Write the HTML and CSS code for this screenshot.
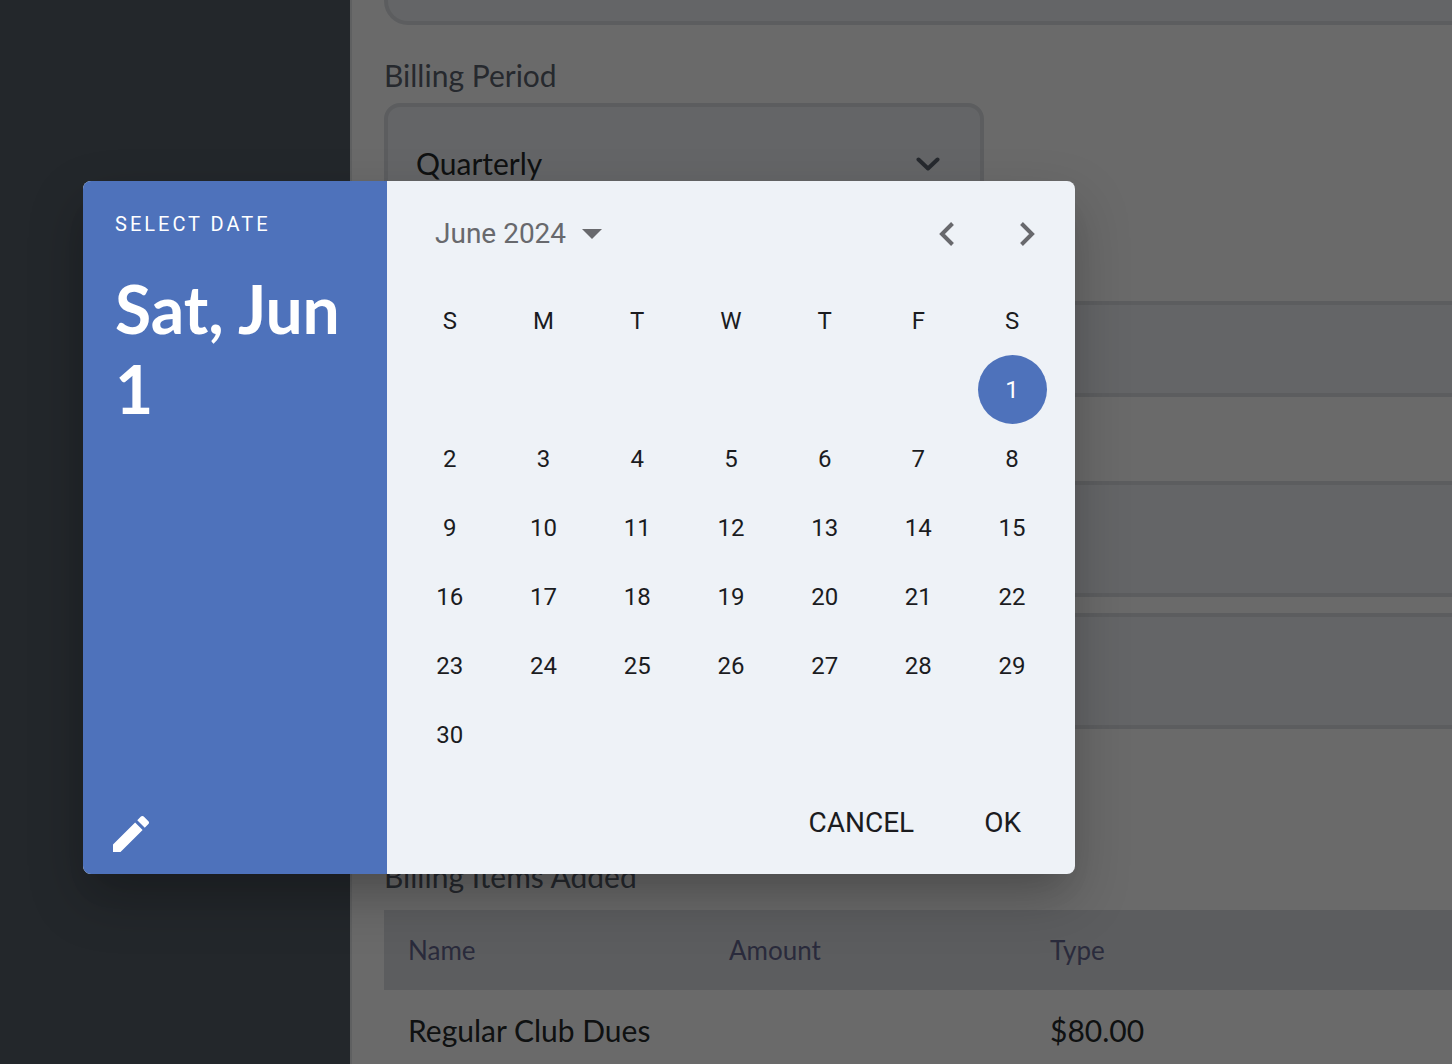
FILE: index.html
```html
<!DOCTYPE html>
<html lang="en">
<head>
    <meta charset="UTF-8">
    <meta name="viewport" content="width=device-width, initial-scale=1.0">
    <title>Billing</title>
    <link rel="stylesheet" href="styles.css">
</head>
<body>
    <div class="page">
        <aside class="sidebar"></aside>
        <main class="content">
            <textarea class="field description" aria-label="Description" readonly></textarea>

            <label class="label" for="period">Billing Period</label>
            <div class="select-wrap">
                <select class="select" id="period">
                    <option>Quarterly</option>
                </select>
                <svg class="chevron" viewBox="0 0 24 14" aria-hidden="true"><path d="M2.5 2.5 12 11.5 21.5 2.5"/></svg>
            </div>

            <input class="field start" type="text" aria-label="Start date" readonly>
            <input class="field tall end" type="text" aria-label="End date" readonly>
            <input class="field tall due" type="text" aria-label="Due date" readonly>

            <h2 class="label items-title">Billing Items Added</h2>
            <table class="items">
                <thead>
                    <tr><th>Name</th><th>Amount</th><th>Type</th></tr>
                </thead>
                <tbody>
                    <tr><td>Regular Club Dues</td><td></td><td>$80.00</td></tr>
                </tbody>
            </table>
        </main>
    </div>

    <div class="scrim"></div>

    <div class="dialog" role="dialog" aria-label="Select date">
        <div class="summary">
            <div class="overline">SELECT DATE</div>
            <h1 class="date">Sat, Jun 1</h1>
            <button class="edit" aria-label="Edit">
                <svg viewBox="3 3 18 18"><path d="M3 17.25V21h3.75L17.81 9.94l-3.75-3.75L3 17.25zM20.71 7.04c.39-.39.39-1.02 0-1.41l-2.34-2.34c-.39-.39-1.02-.39-1.41 0l-1.83 1.83 3.75 3.75 1.83-1.83z"/></svg>
            </button>
        </div>
        <div class="picker">
            <div class="picker-header">
                <button class="month">June 2024
                    <svg viewBox="0 0 20 10" aria-hidden="true"><path d="M0 0h20L10 10z"/></svg>
                </button>
                <div class="nav">
                    <button class="arrow" aria-label="Previous month"><svg viewBox="0 0 16 24"><path d="M13.5 1.5 3 12 13.5 22.5"/></svg></button>
                    <button class="arrow" aria-label="Next month"><svg viewBox="0 0 16 24"><path d="M2.5 1.5 13 12 2.5 22.5"/></svg></button>
                </div>
            </div>
            <table class="calendar">
                <thead>
                    <tr><th>S</th><th>M</th><th>T</th><th>W</th><th>T</th><th>F</th><th>S</th></tr>
                </thead>
                <tbody>
                    <tr><td></td><td></td><td></td><td></td><td></td><td></td><td><button class="day selected">1</button></td></tr>
                    <tr><td><button class="day">2</button></td><td><button class="day">3</button></td><td><button class="day">4</button></td><td><button class="day">5</button></td><td><button class="day">6</button></td><td><button class="day">7</button></td><td><button class="day">8</button></td></tr>
                    <tr><td><button class="day">9</button></td><td><button class="day">10</button></td><td><button class="day">11</button></td><td><button class="day">12</button></td><td><button class="day">13</button></td><td><button class="day">14</button></td><td><button class="day">15</button></td></tr>
                    <tr><td><button class="day">16</button></td><td><button class="day">17</button></td><td><button class="day">18</button></td><td><button class="day">19</button></td><td><button class="day">20</button></td><td><button class="day">21</button></td><td><button class="day">22</button></td></tr>
                    <tr><td><button class="day">23</button></td><td><button class="day">24</button></td><td><button class="day">25</button></td><td><button class="day">26</button></td><td><button class="day">27</button></td><td><button class="day">28</button></td><td><button class="day">29</button></td></tr>
                    <tr><td><button class="day">30</button></td><td></td><td></td><td></td><td></td><td></td><td></td></tr>
                </tbody>
            </table>
            <div class="actions">
                <button class="action">CANCEL</button>
                <button class="action">OK</button>
            </div>
        </div>
    </div>
</body>
</html>
```

FILE: styles.css
```css
* {
    box-sizing: border-box;
}

body {
    margin: 0;
    height: 100vh;
    overflow: hidden;
    position: relative;
    font-family: Lato, sans-serif;
    background: #fff;
}

button {
    border: none;
    padding: 0;
    background: none;
    font-family: Roboto, sans-serif;
    color: inherit;
    cursor: pointer;
}

svg {
    display: block;
}

/* Billing form */
.page {
    display: flex;
    min-height: 100vh;
}

.sidebar {
    flex: 0 0 350px;
    background: #555e67;
}

.content {
    flex: 1;
    min-width: 0;
    display: flex;
    flex-direction: column;
    padding-left: 32px;
    border-left: 2px solid #e4e6e9;
}

.field {
    display: block;
    width: 100%;
    height: 96px;
    padding: 0 28px;
    border: 4px solid #dde0e4;
    border-right: none;
    border-radius: 16px 0 0 16px;
    background: #f0f3f7;
    outline: none;
    resize: none;
}

.description {
    height: 25px;
    border-top: none;
    border-radius: 0 0 0 24px;
}

.label {
    margin: 32px 0 10px;
    font-size: 30px;
    line-height: 36px;
    font-weight: 400;
    color: #5c646f;
}

.select-wrap {
    position: relative;
    width: 600px;
    max-width: 100%;
}

.select {
    appearance: none;
    width: 100%;
    height: 120px;
    padding: 0 28px;
    border: 4px solid #dde0e4;
    border-radius: 16px;
    background: #f0f3f7;
    font: 30px Lato, sans-serif;
    color: #26292b;
}

.chevron {
    position: absolute;
    right: 44px;
    top: 54px;
    width: 24px;
    height: 14px;
    fill: none;
    stroke: #5c646f;
    stroke-width: 4;
    stroke-linecap: round;
    stroke-linejoin: round;
}

.tall {
    height: 116px;
}

.start {
    margin-top: 78px;
}

.end {
    margin-top: 84px;
}

.due {
    margin-top: 16px;
}

.items-title {
    margin: 129px 0 16px;
}

.items {
    width: 100%;
    table-layout: fixed;
    border-collapse: collapse;
    text-align: left;
}

.items th,
.items td {
    height: 80px;
    padding: 0 24px;
    font-size: 30px;
    font-weight: 400;
    color: #26292b;
}

.items th {
    background: #dde0e4;
    font-size: 26px;
    color: #666790;
}

/* first two columns are fixed, the last takes the rest */
.items th:nth-child(-n+2) {
    width: 321px;
}

.scrim {
    position: absolute;
    inset: 0;
    background: rgba(0, 0, 0, 0.584);
}

/* Date picker */
.dialog {
    position: absolute;
    left: 83px;
    top: 181px;
    display: flex;
    width: 992px;
    border-radius: 8px;
    overflow: hidden;
    background: #eef2f7;
    color: #1b1c1f;
    font-family: Roboto, sans-serif;
    box-shadow: 0 22px 30px -14px rgba(0, 0, 0, 0.1), 0 24px 56px rgba(0, 0, 0, 0.22);
}

.summary {
    flex: 0 0 304px;
    display: flex;
    flex-direction: column;
    align-items: flex-start;
    padding: 32px 24px 22px 32px;
    background: #4e72bb;
    color: #fff;
}

.overline {
    font-size: 20px;
    line-height: 22px;
    letter-spacing: 3px;
}

.date {
    margin: 34px 0 0;
    font: 700 66px/80px Lato, sans-serif;
}

.edit {
    margin: auto 0 0 -2px;
}

.edit svg {
    width: 36px;
    height: 36px;
    fill: #fff;
}

.picker {
    flex: 1;
    padding: 0 16px;
}

.picker-header {
    display: flex;
    justify-content: space-between;
    align-items: center;
    height: 105px;
    padding-left: 32px;
    color: #68696d;
}

.month {
    display: flex;
    align-items: center;
    gap: 16px;
    font-size: 28px;
}

.month svg {
    width: 20px;
    height: 10px;
    fill: #68696d;
}

.nav {
    display: flex;
    margin-right: -8px;
}

.arrow {
    display: flex;
    justify-content: center;
    align-items: center;
    width: 80px;
    height: 80px;
}

.arrow svg {
    width: 16px;
    height: 24px;
    fill: none;
    stroke: #68696d;
    stroke-width: 4;
}

.calendar {
    width: 100%;
    table-layout: fixed;
    border-collapse: collapse;
    font-size: 24px;
    text-align: center;
}

.calendar th,
.calendar td {
    height: 69px;
    padding: 0;
    font-weight: 400;
}

.day {
    display: block;
    width: 69px;
    height: 69px;
    margin: 0 auto;
    border-radius: 50%;
    font-size: 24px;
}

.selected {
    background: #4e72bb;
    color: #fff;
}

.actions {
    display: flex;
    justify-content: flex-end;
    align-items: center;
    gap: 38px;
    height: 105px;
    padding: 2px 22px 0 0;
}

.action {
    height: 72px;
    padding: 0 16px;
    font-size: 28px;
}
```
